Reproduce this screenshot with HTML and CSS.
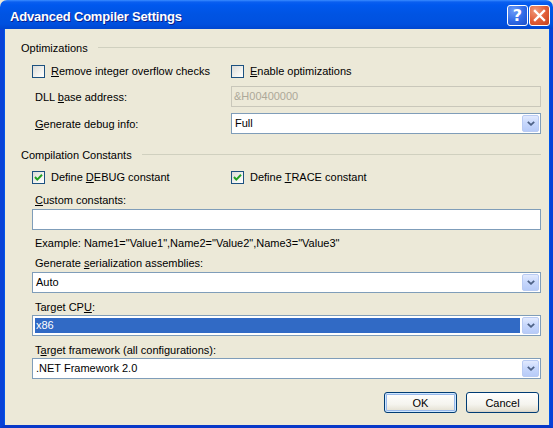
FILE: index.html
```html
<!DOCTYPE html>
<html>
<head>
<meta charset="utf-8">
<link rel="stylesheet" href="styles.css">
</head>
<body>
<div class="window">
  <div class="titlebar">
    <span class="title">Advanced Compiler Settings</span>
    <div class="caption-buttons">
      <span class="cbtn help">?</span>
      <span class="cbtn close"><svg width="13" height="13" viewBox="0 0 13 13"><path d="M2 2 L11 11 M11 2 L2 11" stroke="#fff" stroke-width="2.4" stroke-linecap="square"/></svg></span>
    </div>
  </div>
  <div class="frame">
    <div class="client">
      <div class="group-header hdr1"><span>Optimizations</span><span class="rule"></span></div>
      <div class="two-col cb-row r-opt">
        <div class="check"><span class="box"></span><span><u>R</u>emove integer overflow checks</span></div>
        <div class="check"><span class="box"></span><span><u>E</u>nable optimizations</span></div>
      </div>
      <div class="two-col field-row r-dll">
        <span class="lbl">DLL <u>b</u>ase address:</span>
        <div class="textbox disabled">&amp;H00400000</div>
      </div>
      <div class="two-col field-row r-dbg">
        <span class="lbl"><u>G</u>enerate debug info:</span>
        <div class="combo"><span class="val">Full</span><span class="drop"><svg width="8" height="5" viewBox="0 0 8 5"><path d="M0.8 0.8 L4 3.8 L7.2 0.8" fill="none" stroke="#4D6185" stroke-width="1.8"/></svg></span></div>
      </div>

      <div class="group-header hdr2"><span>Compilation Constants</span><span class="rule"></span></div>
      <div class="two-col cb-row r-const">
        <div class="check"><span class="box checked"><svg width="11" height="11" viewBox="0 0 11 11"><path d="M2 5 L4.3 7.6 L9 2.8" fill="none" stroke="#21A121" stroke-width="2"/></svg></span><span>Define <u>D</u>EBUG constant</span></div>
        <div class="check"><span class="box checked"><svg width="11" height="11" viewBox="0 0 11 11"><path d="M2 5 L4.3 7.6 L9 2.8" fill="none" stroke="#21A121" stroke-width="2"/></svg></span><span>Define <u>T</u>RACE constant</span></div>
      </div>
      <div class="lbl full-lbl l-custom"><u>C</u>ustom constants:</div>
      <div class="textbox t-custom"></div>
      <div class="lbl full-lbl l-example">Example: Name1="Value1",Name2="Value2",Name3="Value3"</div>
      <div class="lbl full-lbl l-ser">Generate <u>s</u>erialization assemblies:</div>
      <div class="combo c-ser"><span class="val">Auto</span><span class="drop"><svg width="8" height="5" viewBox="0 0 8 5"><path d="M0.8 0.8 L4 3.8 L7.2 0.8" fill="none" stroke="#4D6185" stroke-width="1.8"/></svg></span></div>
      <div class="lbl full-lbl l-cpu">Target CP<u>U</u>:</div>
      <div class="combo c-cpu selected"><span class="val">x86</span><span class="drop"><svg width="8" height="5" viewBox="0 0 8 5"><path d="M0.8 0.8 L4 3.8 L7.2 0.8" fill="none" stroke="#4D6185" stroke-width="1.8"/></svg></span></div>
      <div class="lbl full-lbl l-fw">T<u>a</u>rget framework (all configurations):</div>
      <div class="combo c-fw"><span class="val">.NET Framework 2.0</span><span class="drop"><svg width="8" height="5" viewBox="0 0 8 5"><path d="M0.8 0.8 L4 3.8 L7.2 0.8" fill="none" stroke="#4D6185" stroke-width="1.8"/></svg></span></div>

      <div class="buttons">
        <span class="btn default">OK</span>
        <span class="btn">Cancel</span>
      </div>
    </div>
  </div>
</div>
</body>
</html>
```

FILE: styles.css
```css
html, body {
  margin: 0;
  padding: 0;
  background: #ECE9D8;
}
body {
  font-family: "Liberation Sans", Arial, sans-serif;
  font-size: 11px;
  color: #000;
}
u { text-decoration: underline; text-underline-offset: 1px; }

.window {
  width: 553px;
  height: 428px;
  display: flex;
  flex-direction: column;
  overflow: hidden;
}
.titlebar {
  height: 29px;
  flex: none;
  display: flex;
  align-items: center;
  background: linear-gradient(to bottom, #3A8CFF 0px, #0A5FF0 2px, #0058EE 5px, #0054E3 14px, #0050DF 24px, #0046D0 29px);
  border-radius: 7px 7px 0 0;
  position: relative;
}
.title {
  color: #fff;
  font-weight: bold;
  font-size: 13px;
  letter-spacing: -0.2px;
  margin-left: 10px;
  margin-top: 3px;
  text-shadow: 1px 1px 0 #0A1E8C;
  flex: 1;
}
.caption-buttons {
  display: flex;
  gap: 1px;
  margin-right: 3px;
  margin-top: 1px;
}
.cbtn {
  width: 19px;
  height: 19px;
  border: 1px solid #fff;
  border-radius: 3px;
  display: flex;
  align-items: center;
  justify-content: center;
  color: #fff;
}
.help {
  background: radial-gradient(circle at 30% 25%, #6C9CF8 0%, #2E69E6 55%, #1B4FC8 100%);
  font-weight: bold;
  font-size: 16px;
  font-family: "DejaVu Sans", sans-serif;
}
.close {
  background: radial-gradient(circle at 30% 25%, #F09A7C 0%, #E2603A 50%, #C5401A 100%);
}

.frame {
  flex: 1;
  border-left: 4px solid #0842D8;
  border-right: 3px solid #0842D8;
  border-bottom: 3px solid #0838C8;
  box-shadow: inset 1px 0 0 #0055EA, inset -1px 0 0 #0055EA;
  display: flex;
  flex-direction: column;
}
.client {
  flex: 1;
  padding: 0 9px 0 17px;
  display: flex;
  flex-direction: column;
}

.group-header {
  height: 14px;
  line-height: 14px;
  display: flex;
  align-items: center;
}
.group-header .rule {
  flex: 1;
  height: 0;
  border-top: 1px solid #D0D0BF;
  margin-left: 10px;
  margin-top: -1px;
}
.hdr1 { margin-top: 12px; }
.hdr2 { margin-top: 14px; }

.two-col {
  margin-left: 11px;
  display: grid;
  grid-template-columns: 199px 1fr;
  align-items: center;
}
.cb-row { height: 13px; }
.r-opt { margin-top: 10px; }
.r-dll { margin-top: 8px; }
.r-dbg { margin-top: 6px; }
.r-const { margin-top: 9px; }

.check {
  display: flex;
  align-items: center;
  gap: 6px;
  height: 13px;
  line-height: 13px;
}
.box {
  width: 11px;
  height: 11px;
  border: 1px solid #1C5180;
  background: linear-gradient(135deg, #DCDCD7 0%, #F6F6F3 70%, #FFFFFF 100%);
  display: flex;
  align-items: center;
  justify-content: center;
  flex: none;
}

.lbl {
  padding-left: 3px;
  line-height: 14px;
  white-space: nowrap;
}
.full-lbl {
  margin-left: 11px;
  height: 14px;
}
.l-custom { margin-top: 9px; }
.l-example { margin-top: 6px; }
.l-ser { margin-top: 6px; }
.l-cpu { margin-top: 7px; }
.l-fw { margin-top: 7px; }

.textbox, .combo {
  height: 19px;
  border: 1px solid #7F9DB9;
  background: #fff;
  line-height: 19px;
  padding-left: 2px;
  box-sizing: content-box;
  display: flex;
  align-items: center;
}
.textbox.disabled {
  background: #ECE9D8;
  border-color: #C9C7BA;
  color: #ACA899;
}
.t-custom, .c-ser, .c-cpu, .c-fw {
  margin-left: 11px;
}
.t-custom { margin-top: 2px; }
.c-ser { margin-top: 2px; }
.c-cpu { margin-top: 1px; }
.c-fw { margin-top: 1px; }

.combo .val {
  flex: 1;
  padding-left: 1px;
  white-space: nowrap;
  overflow: hidden;
}
.combo.selected .val {
  background: #316AC5;
  color: #fff;
  height: 15px;
  line-height: 15px;
  margin: 0 2px 0 0;
}
.drop {
  width: 15px;
  height: 15px;
  margin: 0 1px 0 0;
  border: 1px solid #B9CBF3;
  border-radius: 2px;
  background: linear-gradient(to bottom, #E2EAFE 0%, #C8D8FC 45%, #B7CBF8 100%);
  display: flex;
  align-items: center;
  justify-content: center;
  flex: none;
}

.buttons {
  margin-top: 13px;
  display: flex;
  justify-content: flex-end;
  gap: 9px;
  margin-right: 2px;
}
.btn {
  width: 71px;
  height: 19px;
  border: 1px solid #003C74;
  border-radius: 3px;
  background: linear-gradient(to bottom, #FFFFFF 0%, #F5F4EE 60%, #E6E3D6 90%, #D6D0C5 100%);
  display: flex;
  align-items: center;
  justify-content: center;
}
.btn.default {
  box-shadow: inset 0 0 0 1px #CEE7FF, inset 0 0 0 2px #98B8EA;
}
```
